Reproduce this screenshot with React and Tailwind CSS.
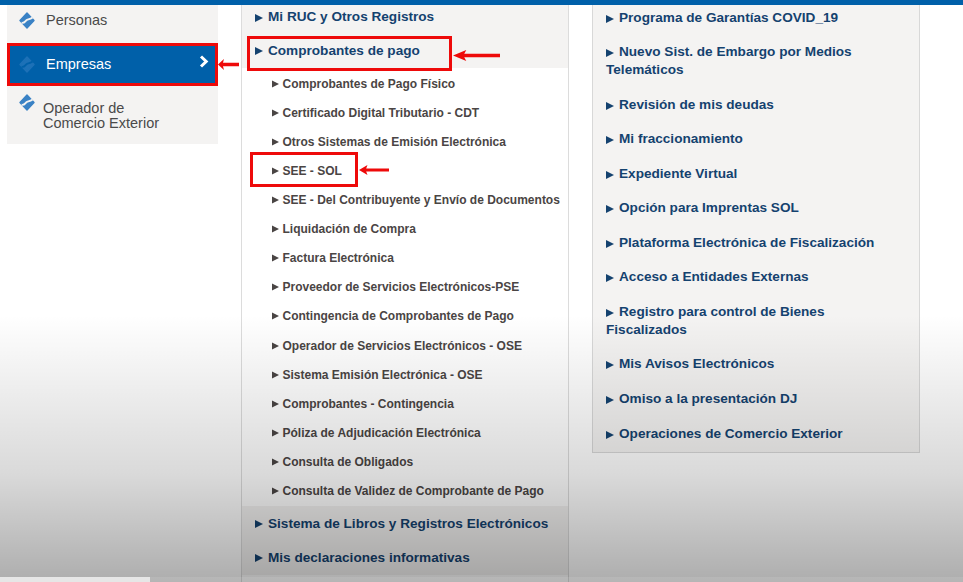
import React from "react";

const subItems = [
  "Comprobantes de Pago Físico",
  "Certificado Digital Tributario - CDT",
  "Otros Sistemas de Emisión Electrónica",
  "SEE - SOL",
  "SEE - Del Contribuyente y Envío de Documentos",
  "Liquidación de Compra",
  "Factura Electrónica",
  "Proveedor de Servicios Electrónicos-PSE",
  "Contingencia de Comprobantes de Pago",
  "Operador de Servicios Electrónicos - OSE",
  "Sistema Emisión Electrónica - OSE",
  "Comprobantes - Contingencia",
  "Póliza de Adjudicación Electrónica",
  "Consulta de Obligados",
  "Consulta de Validez de Comprobante de Pago",
];

const rightItems = [
  "Programa de Garantías COVID_19",
  "Nuevo Sist. de Embargo por Medios Telemáticos",
  "Revisión de mis deudas",
  "Mi fraccionamiento",
  "Expediente Virtual",
  "Opción para Imprentas SOL",
  "Plataforma Electrónica de Fiscalización",
  "Acceso a Entidades Externas",
  "Registro para control de Bienes Fiscalizados",
  "Mis Avisos Electrónicos",
  "Omiso a la presentación DJ",
  "Operaciones de Comercio Exterior",
];

const Logo = ({ className, band = "#f4f3f2" }) => (
  <svg viewBox="0 0 16 17" className={className}>
    <path d="M8 1 15 8.5 8 16 1 8.5Z" fill="#3a82c5" stroke="#3a82c5" strokeWidth="1.4" strokeLinejoin="round" />
    <path d="M2.6 10.8C6 11.4 6.4 8.4 8 7.8 9.6 7.2 11 7.4 13.6 5.4" fill="none" stroke={band} strokeWidth="1.9" />
  </svg>
);

const Arrow = ({ className }) => (
  <svg viewBox="0 0 8 8" className={`inline-block align-[-1px] ${className}`}>
    <path d="M0 0 8 4 0 8Z" fill="currentColor" />
  </svg>
);

const RedArrow = ({ className }) => (
  <svg viewBox="0 0 46 11" className={`absolute ${className}`} preserveAspectRatio="none">
    <path d="M0 5.5 13 0 11 3.8H46V7.2H11L13 11Z" fill="#ee0a0a" />
  </svg>
);

const MainRow = ({ children, className = "" }) => (
  <div className={`pl-[13px] flex items-center text-[13.6px] font-bold text-[#14426f] whitespace-nowrap ${className}`}>
    <Arrow className="w-[8px] h-[8px] text-[#14426f] mr-[5px]" />
    {children}
  </div>
);

export default function App() {
  return (
    <div className="relative w-[963px] h-[582px] overflow-hidden bg-white font-['Liberation_Sans',Arial,sans-serif]">
      <div className="h-[5px] bg-[#0060a9]" />

      <div className="flex items-start">
        {/* left menu */}
        <div className="ml-[7px] w-[211px] h-[139px] bg-[#f4f3f2] text-[#4a4a4a]">
          <div className="h-[38px] flex items-center pl-[12px] gap-[11px] pb-[7px]">
            <Logo className="w-[16px] h-[17px]" />
            <span className="text-[14.5px]">Personas</span>
          </div>
          <div className="relative h-[43px] bg-[#0060a9] border-[3px] border-[#ee0a0a] flex items-center pl-[9px] gap-[11px] text-white">
            <Logo className="w-[16px] h-[17px] opacity-50" band="#0060a9" />
            <span className="text-[14.5px] pt-[1px]">Empresas</span>
            <svg viewBox="0 0 10 13" className="absolute left-[189px] top-[9px] w-[10px] h-[13px]">
              <path d="M2 1.5 7.2 6.5 2 11.5" fill="none" stroke="#ffffff" strokeWidth="3" />
            </svg>
          </div>
          <div className="relative pl-[36px] pt-[15px] leading-[15px] text-[14.5px]">
            <Logo className="absolute left-[12px] top-[8px] w-[16px] h-[17px]" />
            Operador de
            <br />
            Comercio Exterior
          </div>
        </div>

        {/* middle column */}
        <div className="ml-[23px] w-[328px] h-[577px] border-x border-[#dcdcdc]">
          <div className="bg-[#f4f3f2] h-[63px] flex flex-col">
            <MainRow className="h-[25px]">Mi RUC y Otros Registros</MainRow>
            <MainRow className="h-[33px] pt-[9px]">Comprobantes de pago</MainRow>
          </div>
          <div className="pt-[1px]">
            {subItems.map((item) => (
              <div
                key={item}
                className="h-[29.12px] pl-[29.5px] flex items-center text-[12px] font-bold text-[#4a4544] whitespace-nowrap"
              >
                <Arrow className="w-[7px] h-[8px] text-[#4a4544] mr-[4px]" />
                {item}
              </div>
            ))}
          </div>
          <div className="bg-[#f4f3f2] h-[69px] pt-[1px]">
            <MainRow className="h-[34.3px]">Sistema de Libros y Registros Electrónicos</MainRow>
            <MainRow className="h-[34.3px]">Mis declaraciones informativas</MainRow>
          </div>
        </div>

        {/* right column */}
        <div className="ml-[23px] w-[328px] bg-[#f4f3f2] border-x border-b border-[#d8d8d8] pl-[13px] pr-[20px] pb-[9px] pt-[0.5px]">
          {rightItems.map((item) => (
            <div key={item} className="pt-[3px] pb-[13.55px] last:pb-0 leading-[18px] text-[13.6px] font-bold text-[#14426f]">
              <Arrow className="w-[8px] h-[8px] text-[#14426f] mr-[5px]" />
              {item}
            </div>
          ))}
        </div>
      </div>

      {/* red annotations */}
      <div className="absolute left-[247px] top-[36px] w-[205px] h-[35px] border-[3px] border-[#ee0a0a]" />
      <div className="absolute left-[250px] top-[152px] w-[108px] h-[35px] border-[3px] border-[#ee0a0a]" />
      <RedArrow className="left-[218px] top-[59px] w-[21px] h-[11px]" />
      <RedArrow className="left-[453px] top-[50px] w-[47px] h-[11px]" />
      <RedArrow className="left-[359px] top-[165px] w-[30px] h-[10px]" />

      {/* fade over the bottom of the page */}
      <div className="absolute inset-x-0 top-[315px] bottom-0 pointer-events-none bg-gradient-to-b from-[#00000000] via-[#00000026] via-[60%] to-[#00000052]" />

      {/* video progress strip */}
      <div className="absolute left-0 bottom-0 h-[5px] w-full bg-[#ffffff1a]">
        <div className="h-full w-[150px] bg-[#e6e6e6]" />
      </div>
    </div>
  );
}
